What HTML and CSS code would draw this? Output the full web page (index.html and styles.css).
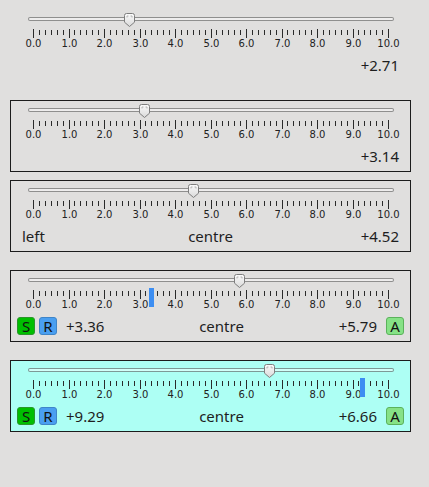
FILE: index.html
```html
<!DOCTYPE html>
<html lang="en">
<head>
    <meta charset="UTF-8">
    <meta name="viewport" content="width=device-width, initial-scale=1.0">
    <title>Sliders</title>
    <link rel="stylesheet" href="styles.css">
</head>
<body>
    <div class="panel">
        <div class="slider plain">
            <div class="scale" data-value="2.71"></div>
            <div class="row">
                <span class="centre"></span>
                <span class="num right">+2.71</span>
            </div>
        </div>

        <div class="slider first-framed">
            <div class="scale" data-value="3.14"></div>
            <div class="row">
                <span class="centre"></span>
                <span class="num right">+3.14</span>
            </div>
        </div>

        <div class="slider tight">
            <div class="scale" data-value="4.52"></div>
            <div class="row">
                <span class="num">left</span>
                <span class="centre">centre</span>
                <span class="num right">+4.52</span>
            </div>
        </div>

        <div class="slider">
            <div class="scale" data-value="5.79" data-marker="3.36"></div>
            <div class="row">
                <span class="btn btn-s">S</span>
                <span class="btn btn-r">R</span>
                <span class="num">+3.36</span>
                <span class="centre">centre</span>
                <span class="num right">+5.79</span>
                <span class="btn btn-a">A</span>
            </div>
        </div>

        <div class="slider cyan">
            <div class="scale" data-value="6.66" data-marker="9.29"></div>
            <div class="row">
                <span class="btn btn-s">S</span>
                <span class="btn btn-r">R</span>
                <span class="num">+9.29</span>
                <span class="centre">centre</span>
                <span class="num right">+6.66</span>
                <span class="btn btn-a">A</span>
            </div>
        </div>
    </div>

    <script>
        // position du 0.0 et largeur d'une unité sur l'échelle
        var ORIGIN = 22;
        var UNIT = 35.5;

        function px(v) {
            return Math.round(ORIGIN + v * UNIT);
        }

        var scales = document.querySelectorAll('.scale');
        for (var s = 0; s < scales.length; s++) {
            var scale = scales[s];
            var html = '<div class="track"></div>';

            for (var i = 0; i <= 60; i++) {
                var x = px(i / 6);
                var major = i % 6 === 0;
                html += '<div class="tick' + (major ? ' major' : '') + '" style="left:' + x + 'px"></div>';
                if (major) {
                    html += '<div class="tick-label" style="left:' + (x - 15) + 'px">' + (i / 6).toFixed(1) + '</div>';
                }
            }

            if (scale.dataset.marker) {
                html += '<div class="marker" style="left:' + (px(parseFloat(scale.dataset.marker)) - 3) + 'px"></div>';
            }

            var tx = px(parseFloat(scale.dataset.value)) - 5;
            html += '<div class="thumb" style="left:' + tx + 'px">' +
                '<svg width="11" height="14" viewBox="0 0 11 14">' +
                '<defs><linearGradient id="tg' + s + '" x1="0" y1="0" x2="0" y2="1">' +
                '<stop offset="0" stop-color="#fcfcfc"/><stop offset="1" stop-color="#d9d9d9"/>' +
                '</linearGradient></defs>' +
                '<path d="M0.5 2.5 Q0.5 0.5 2.5 0.5 H8.5 Q10.5 0.5 10.5 2.5 V9.2 L5.5 13.5 L0.5 9.2 Z" fill="url(#tg' + s + ')" stroke="#7e7e7e"/>' +
                '<path d="M3 4.5 V3 H4.5 M6.5 3 H8 V4.5" fill="none" stroke="#b4b4b4"/>' +
                '</svg></div>';

            scale.innerHTML = html;
        }
    </script>
</body>
</html>
```

FILE: styles.css
```css
/* Page */
body {
    margin: 0;
    background-color: #e0dfde;
    font-family: "DejaVu Sans", sans-serif;
    color: #1e1e1e;
}

.panel {
    padding: 9px 0 0 10px;
}

/* Bloc d'un curseur */
.slider {
    width: 401px;
    box-sizing: border-box;
    border: 1px solid #1c1c1c;
    padding-bottom: 6px;
}

.slider + .slider {
    margin-top: 18px;
}

.slider.first-framed {
    margin-top: 19px;
}

.slider.tight {
    margin-top: 8px;
}

.slider.plain {
    border-color: transparent;
}

.slider.cyan {
    background-color: #adfff4;
}

/* Échelle graduée */
.scale {
    position: relative;
    height: 46px;
}

.track {
    position: absolute;
    left: 17px;
    top: 7px;
    width: 366px;
    height: 4px;
    box-sizing: border-box;
    border: 1px solid rgba(0, 0, 0, 0.4);
    border-radius: 2px;
    background-color: rgba(255, 255, 255, 0.45);
}

.tick {
    position: absolute;
    top: 20px;
    width: 1px;
    height: 5px;
    background-color: #2a2a2a;
}

.tick.major {
    top: 19px;
    height: 9px;
}

.tick-label {
    position: absolute;
    top: 28px;
    width: 31px;
    font-size: 10px;
    line-height: 12px;
    text-align: center;
    color: #222;
}

.marker {
    position: absolute;
    top: 17px;
    width: 5px;
    height: 19px;
    background-color: #3d8ef2;
}

.thumb {
    position: absolute;
    top: 3px;
    width: 11px;
    height: 14px;
}

.thumb svg {
    display: block;
}

/* Ligne des valeurs */
.row {
    display: flex;
    align-items: flex-start;
    gap: 4px;
    height: 18px;
    padding: 0 6px;
    font-family: "Noto Sans", "DejaVu Sans", sans-serif;
}

.num,
.centre {
    font-size: 15px;
    line-height: 16px;
    padding-top: 1px;
    white-space: nowrap;
}

.num {
    min-width: 43px;
    padding-left: 5px;
    padding-right: 5px;
}

.num.right {
    text-align: right;
}

.centre {
    flex: 1;
    text-align: center;
}

/* Petits boutons */
.btn {
    width: 18px;
    height: 18px;
    box-sizing: border-box;
    border: 1px solid;
    border-radius: 3px;
    font-size: 15px;
    line-height: 16px;
    text-align: center;
    color: #111;
}

.btn-s {
    background-color: #00bf00;
    border-color: #2a962a;
}

.btn-r {
    background-color: #4a9ff0;
    border-color: #3f85c8;
}

.btn-a {
    background-color: #86e286;
    border-color: #5bb25b;
}
```
